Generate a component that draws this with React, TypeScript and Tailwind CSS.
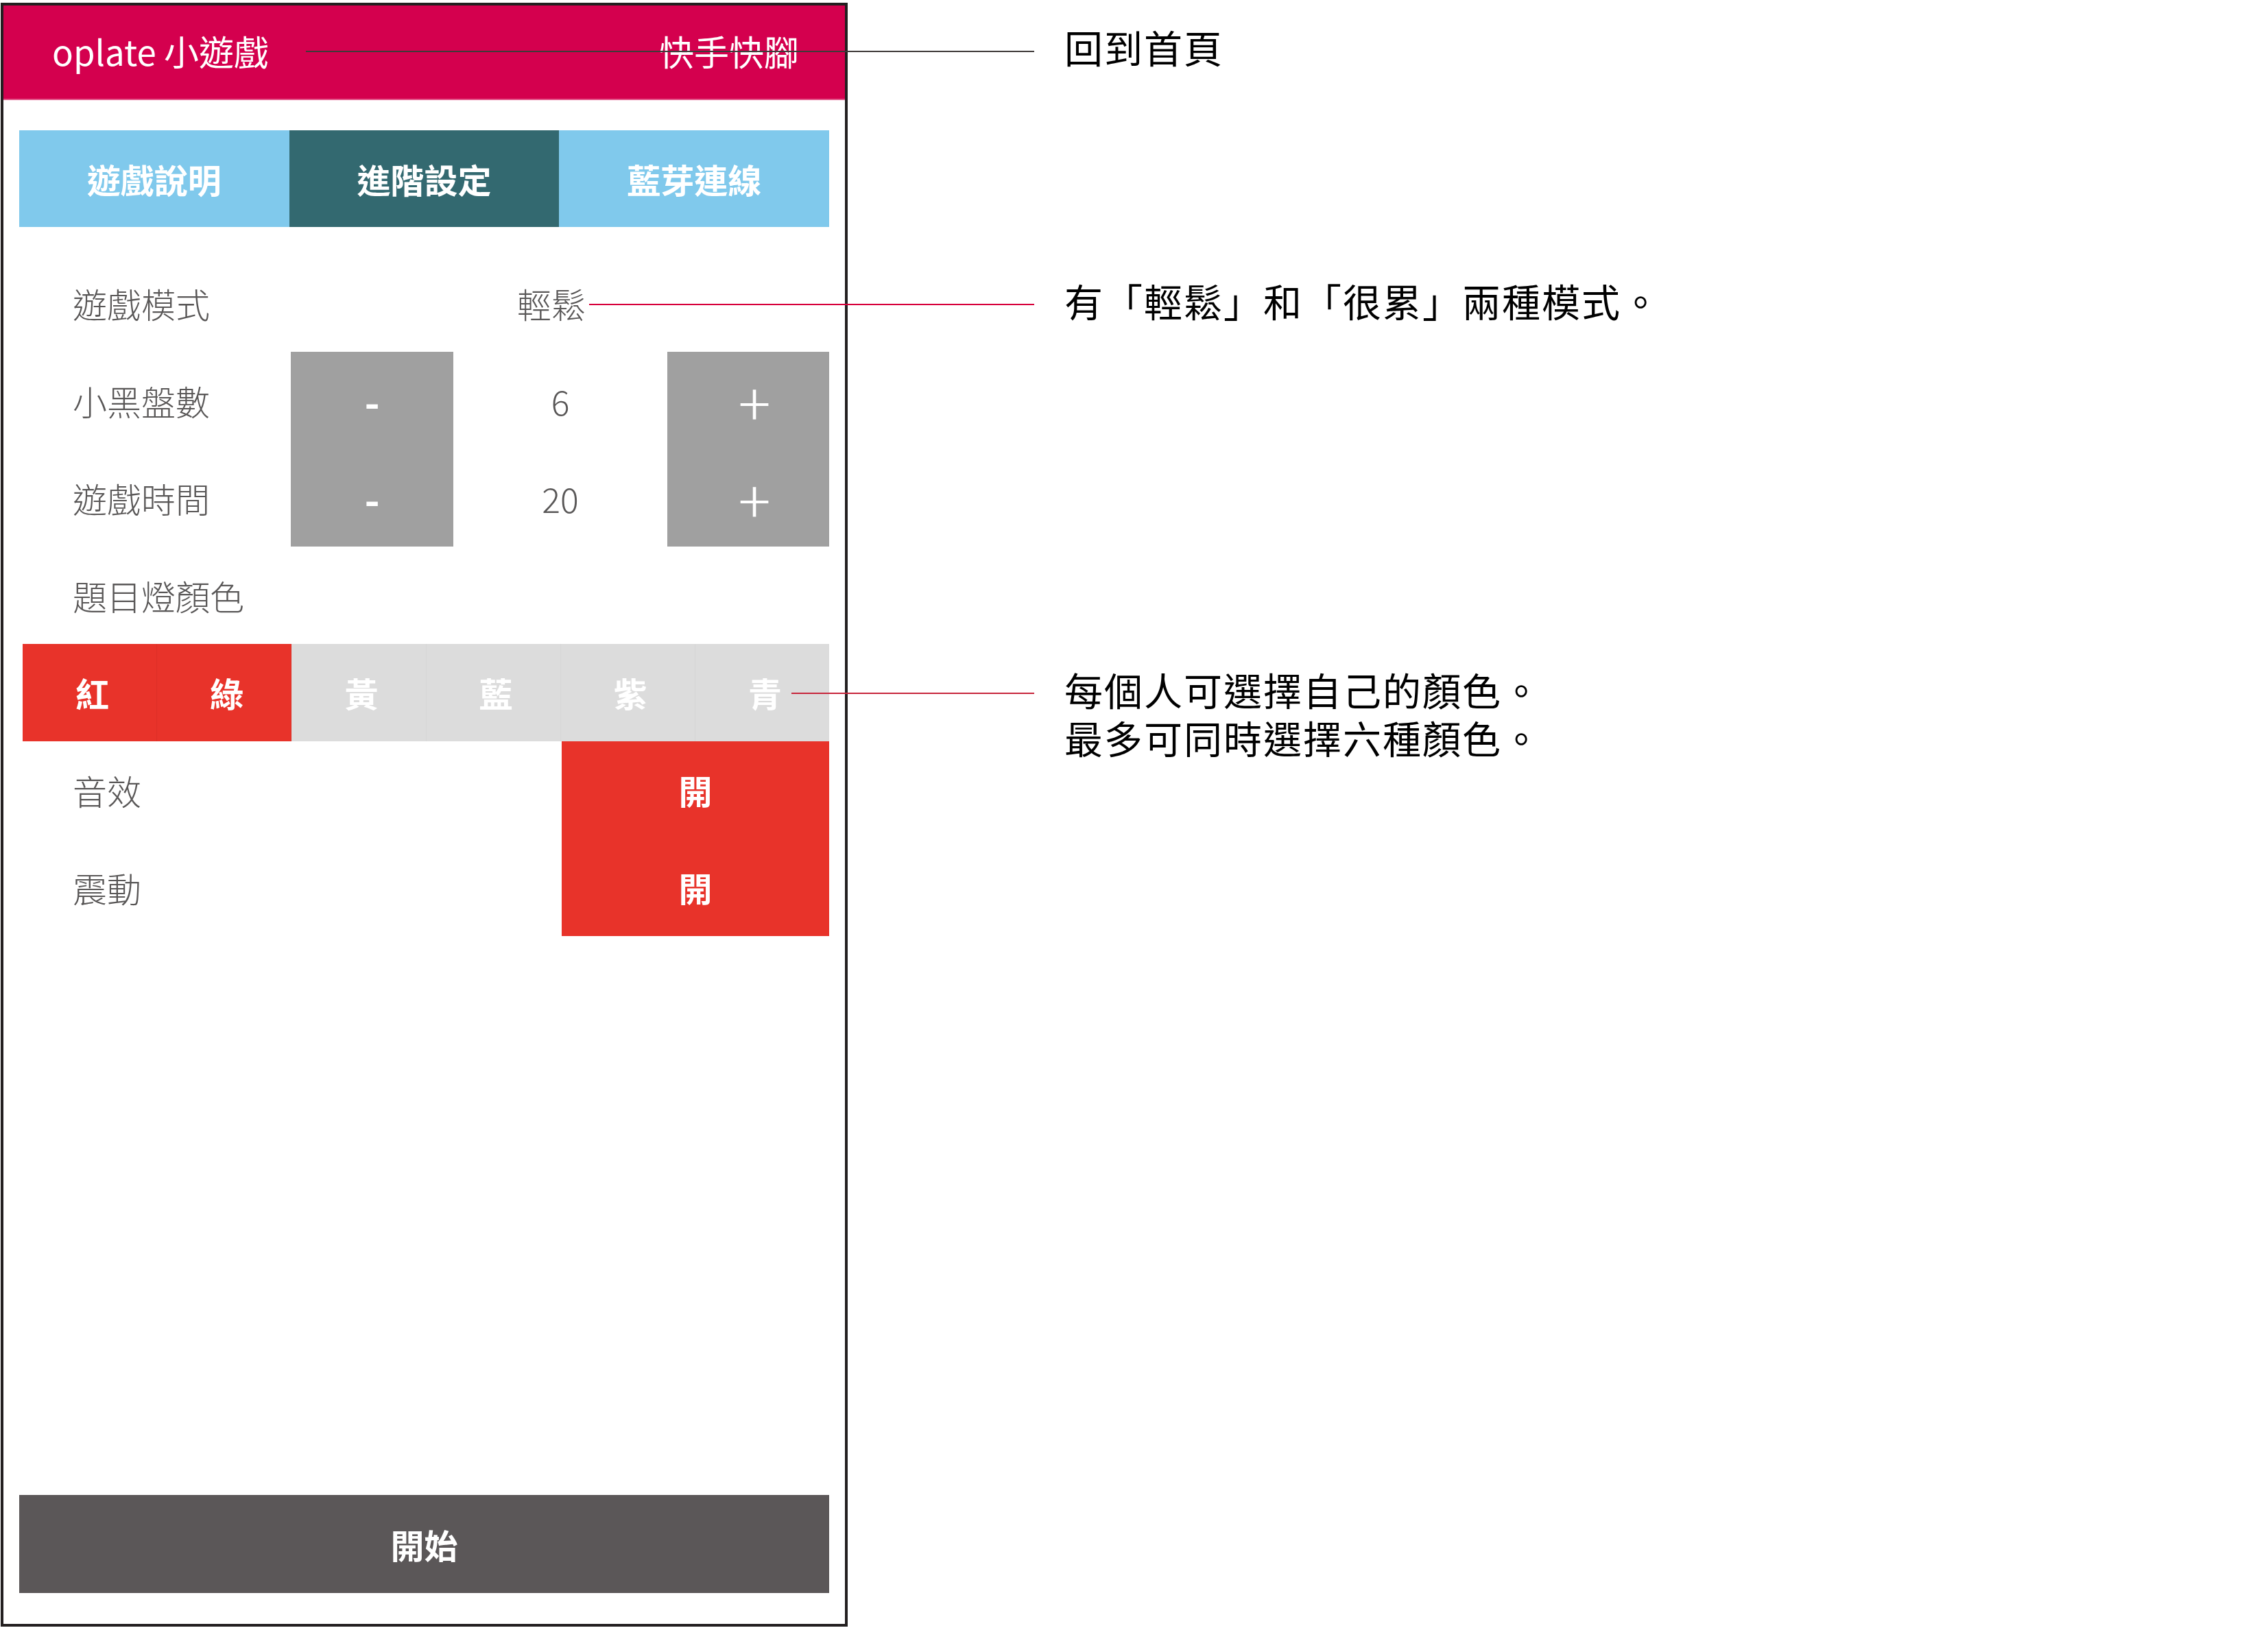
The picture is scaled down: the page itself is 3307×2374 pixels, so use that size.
import React from 'react';

const FONT = { fontFamily: '"Noto Sans CJK TC", "Noto Sans", sans-serif' };

const TABS = [
  { label: '遊戲說明', active: false },
  { label: '進階設定', active: true },
  { label: '藍芽連線', active: false },
];

const COLORS = [
  { label: '紅', on: true },
  { label: '綠', on: true },
  { label: '黃', on: false },
  { label: '藍', on: false },
  { label: '紫', on: false },
  { label: '青', on: false },
];

function Stepper({ label, value }: { label: string; value: string }) {
  return (
    <div className="flex h-[142px] items-center">
      <div className="w-[396px] pl-[78px] text-[50px] font-light text-[#595757]">{label}</div>
      <div className="flex h-full w-[237px] items-center justify-center text-[60px] leading-none font-bold text-white">-</div>
      <div className="flex h-full w-[312px] items-center justify-center text-[50px] font-light text-[#595757]">{value}</div>
      <div className="flex h-full w-[236px] items-center justify-center pl-[18px] text-[88px] leading-none font-light text-white">+</div>
    </div>
  );
}

export default function App() {
  return (
    <div className="relative flex h-[2374px] w-[3307px] bg-white" style={FONT}>
      {/* phone */}
      <div className="ml-[1px] mt-[4px] flex h-[2368px] w-[1235px] flex-col border-4 border-[#231f20]">
        <div className="flex h-[138px] items-center justify-between border-b-2 border-[#e2578a] bg-[#d4004e] pb-[4px] pl-[71px] pr-[67px] text-[51px] text-white">
          <span>oplate 小遊戲</span>
          <span>快手快腳</span>
        </div>

        <div className="mx-[23px] mt-[44px] flex h-[141px]">
          {TABS.map((t) => (
            <div
              key={t.label}
              className={`flex flex-1 items-center justify-center text-[49px] font-bold text-white ${
                t.active ? 'bg-[#336970]' : 'bg-[#80c9ec]'
              }`}
            >
              {t.label}
            </div>
          ))}
        </div>

        <div className="mx-[23px] mt-[40px] flex flex-col">
          <div className="flex h-[142px] items-center">
            <div className="w-[396px] pl-[78px] text-[50px] font-light text-[#595757]">遊戲模式</div>
            <div className="w-[237px]" />
            <div className="w-[312px] pr-[26px] text-center text-[50px] font-light text-[#595757]">輕鬆</div>
          </div>

          <div className="relative">
            <div className="absolute left-[396px] top-0 h-[284px] w-[237px] bg-[#a0a0a0]" />
            <div className="absolute left-[945px] top-0 h-[284px] w-[236px] bg-[#a0a0a0]" />
            <div className="relative">
              <Stepper label="小黑盤數" value="6" />
              <Stepper label="遊戲時間" value="20" />
            </div>
          </div>

          <div className="flex h-[142px] items-center pl-[78px] text-[50px] font-light text-[#595757]">題目燈顏色</div>

          <div className="ml-[5px] flex h-[142px]">
            {COLORS.map((c, i) => (
              <div
                key={c.label}
                className={`flex flex-1 items-center justify-center pl-[8px] text-[49px] font-bold text-white ${
                  c.on ? 'bg-[#e8332a]' : 'bg-[#dcdcdc]'
                } ${i < COLORS.length - 1 ? (c.on ? 'border-r border-[#dd2f27]' : 'border-r border-[#d6d6d6]') : ''}`}
              >
                {c.label}
              </div>
            ))}
          </div>

          <div className="flex">
            <div className="flex flex-1 flex-col">
              <div className="flex h-[142px] items-center pl-[78px] text-[50px] font-light text-[#595757]">音效</div>
              <div className="flex h-[142px] items-center pl-[78px] text-[50px] font-light text-[#595757]">震動</div>
            </div>
            <div className="flex w-[390px] flex-col bg-[#e8332a] text-[49px] font-bold text-white">
              <div className="flex h-[142px] items-center justify-center">開</div>
              <div className="flex h-[142px] items-center justify-center">開</div>
            </div>
          </div>
        </div>

        <div className="flex-1" />

        <div className="mx-[23px] mb-[45px] flex h-[143px] items-center justify-center bg-[#5b5758] text-[49px] font-bold text-white">
          開始
        </div>
      </div>

      {/* annotations */}
      <div className="ml-[316px] flex flex-col text-[56px] leading-[70px] tracking-[2px] text-black">
        <div className="mt-[33px]">回到首頁</div>
        <div className="mt-[300px]">有「輕鬆」和「很累」兩種模式。</div>
        <div className="mt-[497px]">
          <div>每個人可選擇自己的顏色。</div>
          <div>最多可同時選擇六種顏色。</div>
        </div>
      </div>

      {/* callout lines */}
      <div className="absolute left-[446px] top-[74px] h-[2px] w-[1062px] bg-[#3e3a39]" />
      <div className="absolute left-[859px] top-[443px] h-[2px] w-[649px] bg-[#d7003a]" />
      <div className="absolute left-[1154px] top-[1010px] h-[2px] w-[354px] bg-[#c7243a]" />
    </div>
  );
}
